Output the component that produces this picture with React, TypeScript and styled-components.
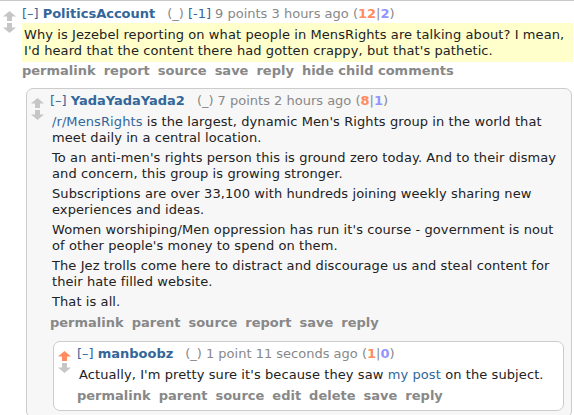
import React from "react";
import styled, { createGlobalStyle } from "styled-components";

const GlobalStyle = createGlobalStyle`
  body {
    margin: 0;
    background: #fff;
    font-family: "DejaVu Sans", Verdana, sans-serif;
  }
`;

type CommentData = {
  author: string;
  weight?: string;
  score: string;
  time: string;
  ups: number;
  downs: number;
  liked?: boolean;
  highlight?: boolean;
  body: React.ReactNode[];
  buttons: string[];
  replies?: CommentData[];
};

function Arrow({ down, active }: { down?: boolean; active?: boolean }) {
  return (
    <svg width="13" height="10" viewBox="0 0 13 10" style={{ display: "block" }}>
      <path
        d="M6.5 0 L13 5.5 L9 5.5 L9 10 L4 10 L4 5.5 L0 5.5 Z"
        fill={active ? "#ff8b60" : "#c6c6c6"}
        transform={down ? "rotate(180 6.5 5)" : undefined}
      />
    </svg>
  );
}

function Comment({ data, depth }: { data: CommentData; depth: number }) {
  return (
    <Thing $depth={depth}>
      <Midcol>
        <Arrow active={data.liked} />
        <Arrow down />
      </Midcol>
      <Entry>
        <Tagline>
          <Expand>[–]</Expand>
          <Author>{data.author}</Author>
          <Tag>(_)</Tag>
          {data.weight && <Weight>{data.weight}</Weight>}
          <span>
            {data.score} {data.time} (<Ups>{data.ups}</Ups>|<Downs>{data.downs}</Downs>)
          </span>
        </Tagline>
        <Usertext $highlight={data.highlight}>
          {data.body.map((p, i) => (
            <Para key={i}>{p}</Para>
          ))}
        </Usertext>
        <Buttons>
          {data.buttons.map((b) => (
            <li key={b}>{b}</li>
          ))}
        </Buttons>
        {data.replies?.map((r) => (
          <Comment key={r.author} data={r} depth={depth + 1} />
        ))}
      </Entry>
    </Thing>
  );
}

export default function App() {
  return (
    <>
      <GlobalStyle />
      <Page>
        <Comment data={thread} depth={0} />
      </Page>
    </>
  );
}

const Page = styled.div`
  border-top: 1px solid #c8c8c8;
  padding-top: 5px;
  width: 574px;
  height: 409px;
  overflow: hidden;
`;

const Thing = styled.div<{ $depth: number }>`
  display: flex;
  align-items: flex-start;
  gap: 6px;
  font-size: 13px;
  line-height: 16px;
  color: #222;
  ${({ $depth }) =>
    $depth === 0
      ? `padding-left: 3px;`
      : `
    margin: ${$depth === 1 ? "9px 2px 0 4px" : "10px 2px 0 3px"};
    padding: 4px 5px 6px 4px;
    border: 1px solid #ccc;
    border-radius: 7px;
    background: ${$depth % 2 === 1 ? "#f7f7f8" : "#fff"};
  `}
`;

const Midcol = styled.div`
  display: flex;
  flex-direction: column;
  gap: 2px;
  padding-top: 5px;
  flex-shrink: 0;
`;

const Entry = styled.div`
  flex: 1;
  min-width: 0;
`;

const Tagline = styled.div`
  color: #888;
  white-space: nowrap;
`;

const Expand = styled.span`
  color: #369;
  margin-right: 4px;
`;

const Author = styled.span`
  color: #369;
  font-weight: bold;
  margin-right: 12px;
`;

const Tag = styled.span`
  color: #888;
  margin-right: 4px;
`;

const Weight = styled.span`
  color: #369;
  margin-right: 4px;
`;

const Ups = styled.span`
  color: #ff8b60;
  font-weight: bold;
`;

const Downs = styled.span`
  color: #9494ff;
  font-weight: bold;
`;

const Usertext = styled.div<{ $highlight?: boolean }>`
  margin-top: 1px;
  padding: 4px 5px ${({ $highlight }) => ($highlight ? "3px" : "4px")} 2px;
  letter-spacing: 0.09px;
  background: ${({ $highlight }) => ($highlight ? "#ffffcc" : "transparent")};
  margin-right: ${({ $highlight }) => ($highlight ? "1px" : "0")};
`;

const Para = styled.p`
  margin: 0 0 4px;
  &:last-child {
    margin-bottom: 0;
  }
`;

const Link = styled.span`
  color: #369;
`;

const Buttons = styled.ul`
  list-style: none;
  margin: 1px 0 0;
  padding: 0;
  display: flex;
  gap: 8px;
  white-space: nowrap;
  li {
    color: #888;
    font-weight: bold;
  }
`;

const thread: CommentData = {
  author: "PoliticsAccount",
  weight: "[-1]",
  score: "9 points",
  time: "3 hours ago",
  ups: 12,
  downs: 2,
  highlight: true,
  body: [
    "Why is Jezebel reporting on what people in MensRights are talking about? I mean, I'd heard that the content there had gotten crappy, but that's pathetic.",
  ],
  buttons: ["permalink", "report", "source", "save", "reply", "hide child comments"],
  replies: [
    {
      author: "YadaYadaYada2",
      score: "7 points",
      time: "2 hours ago",
      ups: 8,
      downs: 1,
      body: [
        <>
          <Link>/r/MensRights</Link> is the largest, dynamic Men's Rights group in the world that
          meet daily in a central location.
        </>,
        "To an anti-men's rights person this is ground zero today. And to their dismay and concern, this group is growing stronger.",
        "Subscriptions are over 33,100 with hundreds joining weekly sharing new experiences and ideas.",
        "Women worshiping/Men oppression has run it's course - government is nout of other people's money to spend on them.",
        "The Jez trolls come here to distract and discourage us and steal content for their hate filled website.",
        "That is all.",
      ],
      buttons: ["permalink", "parent", "source", "report", "save", "reply"],
      replies: [
        {
          author: "manboobz",
          score: "1 point",
          time: "11 seconds ago",
          ups: 1,
          downs: 0,
          liked: true,
          body: [
            <>
              Actually, I'm pretty sure it's because they saw <Link>my post</Link> on the subject.
            </>,
          ],
          buttons: ["permalink", "parent", "source", "edit", "delete", "save", "reply"],
        },
      ],
    },
  ],
};
